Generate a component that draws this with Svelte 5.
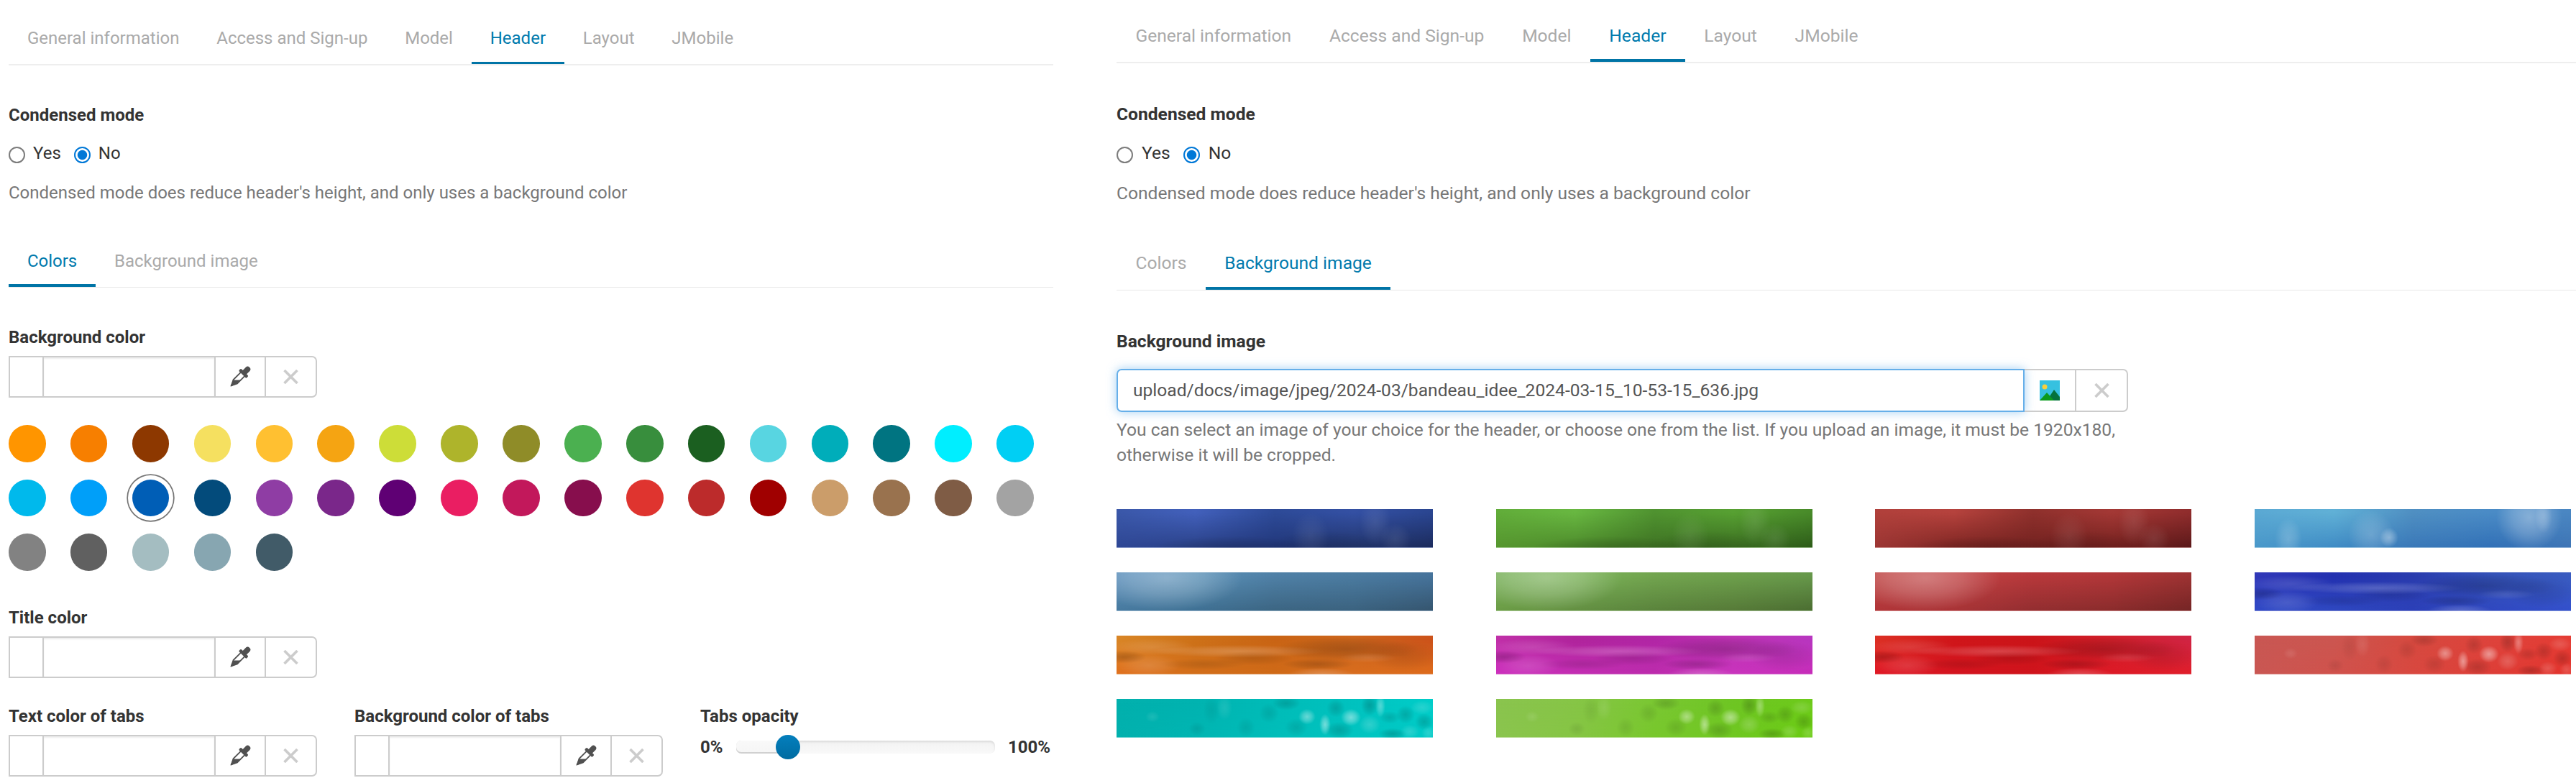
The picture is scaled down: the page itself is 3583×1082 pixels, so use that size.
<script>
    const mainTabs = ["General information", "Access and Sign-up", "Model", "Header", "Layout", "JMobile"];
    const subTabs = ["Colors", "Background image"];

    let selectedColor = "#005eb6";
    let imagePath = "upload/docs/image/jpeg/2024-03/bandeau_idee_2024-03-15_10-53-15_636.jpg";
    let opacity = 20;

    const colors = [
        "#ff9500", "#f77f00", "#8d3800", "#f5e060", "#ffc031", "#f5a412", "#cddd38", "#aeb42b", "#8f8c28",
        "#4bb050", "#388e3d", "#1b5f20", "#58d5e1", "#00adba", "#007481", "#00eeff", "#00cff4",
        "#00b9ec", "#009ff9", "#005eb6", "#034b7b", "#8f3da4", "#7a278a", "#5f0074", "#ea1e62", "#c2185b",
        "#870e4d", "#df342f", "#bc2b2b", "#a00000", "#cb9d6a", "#99724e", "#7f5c45", "#a3a3a3",
        "#828282", "#606060", "#a4bdc1", "#87a6b1", "#415b68"
    ];

    // top / bottom: gradient colors from left to right
    const images = [
        { kind: "waves", top: ["#3a57a8", "#4260bb", "#2d4a97", "#3450a3", "#2a4590"], bottom: ["#2f4794", "#2a4187", "#22377a", "#22356c", "#1c2b5c"] },
        { kind: "waves", top: ["#61ac39", "#68b741", "#4f9230", "#57a032", "#488a29"], bottom: ["#56962f", "#4d8a2b", "#3f7323", "#3b6d21", "#2d5b19"] },
        { kind: "waves", top: ["#b0403b", "#b5423d", "#8e302c", "#a33835", "#8f2c2c"], bottom: ["#9c3634", "#7e2623", "#732220", "#74211f", "#5a191a"] },
        { kind: "bokeh", top: ["#5aa8d3", "#60b0d6", "#4f8fc2", "#4a8bc6", "#4a86c2"], bottom: ["#4a98c9", "#3f8bc4", "#3a78b8", "#3270b6", "#3f75b5"] },
        { kind: "glow", top: ["#6293bd", "#5a90b6", "#4f80a6", "#4b7ba0", "#46739b"], bottom: ["#477a9f", "#3f7093", "#3c6582", "#3b627f", "#35556e"] },
        { kind: "glow", top: ["#7db35f", "#7ab258", "#72a44f", "#6d9f4c", "#66974a"], bottom: ["#6b9c45", "#638f42", "#5a833c", "#567a38", "#4b6d31"] },
        { kind: "glow", top: ["#c04a49", "#c04344", "#b7383b", "#b13739", "#9c3232"], bottom: ["#b03538", "#a83336", "#922e30", "#8a2c2c", "#742525"] },
        { kind: "smoke", top: ["#3138b8", "#2331b0", "#2a3cae", "#3452b8", "#3a5cc0"], bottom: ["#304ac6", "#2f48c0", "#2c40b8", "#3048c0", "#3350cc"] },
        { kind: "smoke", top: ["#d98626", "#cd7118", "#c96414", "#cc651c", "#cc521a"], bottom: ["#e0701e", "#d26e1a", "#cf6a18", "#d86d1e", "#dd6c1c"] },
        { kind: "smoke", top: ["#c030a8", "#b0249c", "#b226a6", "#bd33b3", "#b836c0"], bottom: ["#cc30bd", "#c32eb3", "#bc2cac", "#c934bd", "#c72cb8"] },
        { kind: "smoke", top: ["#dc3024", "#d0161a", "#cb1419", "#d01f2a", "#d02444"], bottom: ["#e01826", "#d3141f", "#cf141c", "#dd1a26", "#e01e2a"] },
        { kind: "pixels", top: ["#c95753", "#cc5650", "#d6493f", "#de433c", "#e43c34"], bottom: ["#c95753", "#d0524c", "#d84840", "#dd3e37", "#e2332d"] },
        { kind: "pixels", top: ["#02b0ad", "#00b3b0", "#00bcb8", "#00c2bf", "#00cdc9"], bottom: ["#02b0ad", "#00b5b2", "#00bdb9", "#00c4c0", "#00c9c5"] },
        { kind: "pixels", top: ["#8ac44e", "#86c546", "#7ac732", "#6ec523", "#6dca1a"], bottom: ["#8ac44e", "#86c544", "#78c72c", "#70c722", "#6acb12"] }
    ];

    // light and dark spots over the gradient: x, y, rx, ry, tone, opacity
    const blobs = {
        waves: [[290, 54, 80, 24, "dark", 0.12], [270, 38, 26, 34, "light", 0.08], [360, 18, 22, 34, "light", 0.09], [388, 42, 22, 22, "light", 0.09], [160, 54, 110, 16, "dark", 0.15]],
        bokeh: [[47, 42, 19, 30, "light", 0.2], [162, 36, 32, 34, "light", 0.2], [187, 40, 13, 14, "light", 0.35], [382, 12, 46, 46, "light", 0.34], [402, 10, 12, 24, "light", 0.2]],
        glow: [[70, 8, 105, 46, "light", 0.3]],
        smoke: [
            [50, 16, 60, 12, "light", 0.12], [170, 22, 120, 9, "light", 0.2], [10, 30, 32, 9, "dark", 0.18],
            [45, 42, 44, 16, "light", 0.13], [320, 19, 100, 17, "dark", 0.18], [190, 32, 56, 10, "dark", 0.1], [350, 31, 40, 7, "light", 0.1],
            [280, 40, 50, 8, "dark", 0.16], [400, 28, 50, 22, "dark", 0.09], [285, 54, 46, 9, "light", 0.2], [120, 40, 60, 8, "dark", 0.1]
        ],
        pixels: [
            [50, 25, 10, 8, "light", 0.1], [132, 16, 12, 20, "dark", 0.06], [150, 12, 11, 18, "light", 0.1], [112, 42, 12, 10, "dark", 0.08],
            [180, 40, 13, 14, "dark", 0.08], [212, 20, 14, 14, "dark", 0.09], [236, 6, 20, 10, "dark", 0.14], [250, 40, 16, 13, "dark", 0.1],
            [265, 25, 12, 11, "light", 0.4], [290, 36, 8, 15, "light", 0.45], [326, 26, 14, 12, "light", 0.45], [305, 13, 13, 13, "dark", 0.14],
            [310, 44, 20, 12, "dark", 0.15], [352, 9, 12, 15, "dark", 0.18], [367, 10, 7, 16, "light", 0.32], [380, 26, 15, 9, "dark", 0.12],
            [352, 36, 15, 13, "light", 0.18], [384, 49, 20, 8, "dark", 0.18], [402, 22, 13, 13, "dark", 0.15], [425, 12, 16, 10, "light", 0.15],
            [428, 32, 13, 12, "dark", 0.16], [408, 46, 13, 10, "light", 0.16], [434, 48, 10, 10, "light", 0.16]
        ]
    };
</script>

{#snippet tabBar(tabs, active)}
    <div class="tabs">
        {#each tabs as tab}
            <span class="tab" class:active={tab === active}>{tab}</span>
        {/each}
    </div>
{/snippet}

{#snippet condensedMode(name)}
    <div class="title">Condensed mode</div>
    <div class="radios">
        <label><input type="radio" {name} />Yes</label>
        <label><input type="radio" {name} checked />No</label>
    </div>
    <div class="help">Condensed mode does reduce header's height, and only uses a background color</div>
{/snippet}

{#snippet cross()}
    <svg class="cross" viewBox="0 0 20 20">
        <path d="M1 1L19 19M19 1L1 19" />
    </svg>
{/snippet}

{#snippet colorField(label)}
    <div class="field">
        <div class="title">{label}</div>
        <div class="color-input">
            <span class="preview"></span>
            <input type="text" aria-label={label} />
            <button class="pick" aria-label="Pick a color">
                <svg viewBox="0 0 28 28">
                    <g transform="rotate(45 14 14)">
                        <rect x="10.200" y="-4.500" width="7.600" height="13" rx="3.600" />
                        <rect x="6.500" y="5" width="15" height="4.600" rx="1.600" />
                        <path class="tube" d="M10.200 9V23.500L14 31L17.800 23.500V9" />
                        <path d="M10.200 24L17.800 16.400V23.500L14.500 32.500H13.500Z" />
                    </g>
                </svg>
            </button>
            <button class="clear" aria-label="Clear">{@render cross()}</button>
        </div>
    </div>
{/snippet}

<div class="page">
    <section class="panel colors">
        {@render tabBar(mainTabs, "Header")}
        {@render condensedMode("condensed-colors")}
        <div class="sub">{@render tabBar(subTabs, "Colors")}</div>

        {@render colorField("Background color")}
        <div class="swatches">
            {#each colors as color}
                <button
                    class="swatch"
                    class:selected={color === selectedColor}
                    style="background-color: {color};"
                    on:click={() => (selectedColor = color)}
                    aria-label={color}
                ></button>
            {/each}
        </div>

        {@render colorField("Title color")}
        <div class="row">
            {@render colorField("Text color of tabs")}
            {@render colorField("Background color of tabs")}
            <div class="field">
                <div class="title">Tabs opacity</div>
                <div class="slider">
                    <b>0%</b>
                    <div class="track">
                        <div class="selection" style="width: {opacity}%;"></div>
                        <div class="handle" style="left: {opacity}%;"></div>
                    </div>
                    <b>100%</b>
                </div>
            </div>
        </div>
    </section>

    <section class="panel image">
        {@render tabBar(mainTabs, "Header")}
        {@render condensedMode("condensed-image")}
        <div class="sub">{@render tabBar(subTabs, "Background image")}</div>

        <div class="title">Background image</div>
        <div class="file-input">
            <div class="path">{imagePath}</div>
            <button class="browse" aria-label="Choose an image">
                <svg viewBox="0 0 28 28">
                    <rect width="28" height="28" fill="#36c1e0" />
                    <circle cx="7" cy="9" r="3.500" fill="#f8cf3d" />
                    <path d="M10 28L20 13L28 23V28Z" fill="#04723c" />
                    <path d="M0 28L10 17L20 28Z" fill="#0b9a1d" />
                </svg>
            </button>
            <button class="clear" aria-label="Clear">{@render cross()}</button>
        </div>
        <div class="help note">You can select an image of your choice for the header, or choose one from the list. If you upload an image, it must be 1920x180, otherwise it will be cropped.</div>

        <div class="gallery">
            {#each images as image, i}
                <svg class="thumb" viewBox="0 0 440 54" preserveAspectRatio="none">
                    <defs>
                        <linearGradient id="top{i}">
                            {#each image.top as c, k}<stop offset={k / 4} stop-color={c} />{/each}
                        </linearGradient>
                        <linearGradient id="bottom{i}">
                            {#each image.bottom as c, k}<stop offset={k / 4} stop-color={c} />{/each}
                        </linearGradient>
                        <linearGradient id="fade{i}" x1="0" y1="0" x2="0" y2="1">
                            <stop offset="0.1" stop-color="#000" />
                            <stop offset="1" stop-color="#fff" />
                        </linearGradient>
                        <mask id="mask{i}"><rect width="440" height="54" fill="url(#fade{i})" /></mask>
                        <radialGradient id="light{i}">
                            <stop offset="0" stop-color="#fff" />
                            <stop offset="0.5" stop-color="#fff" stop-opacity="0.6" />
                            <stop offset="1" stop-color="#fff" stop-opacity="0" />
                        </radialGradient>
                        <radialGradient id="dark{i}">
                            <stop offset="0" stop-color="#000" />
                            <stop offset="0.5" stop-color="#000" stop-opacity="0.6" />
                            <stop offset="1" stop-color="#000" stop-opacity="0" />
                        </radialGradient>
                    </defs>
                    <rect width="440" height="54" fill="url(#top{i})" />
                    <rect width="440" height="54" fill="url(#bottom{i})" mask="url(#mask{i})" />
                    {#each blobs[image.kind] as [cx, cy, rx, ry, tone, alpha]}
                        <ellipse {cx} {cy} {rx} {ry} fill="url(#{tone}{i})" opacity={alpha} />
                    {/each}
                </svg>
            {/each}
        </div>
    </section>
</div>

<style>
    :global(body) {
        background: #fff;
        overflow: hidden;
    }

    .page {
        display: flex;
        height: 1082px;
        overflow: hidden;
        font-family: Roboto, "Liberation Sans", sans-serif;
        color: #333;
    }

    .panel {
        box-sizing: border-box;
        flex: none;
    }

    .colors {
        width: 1465px;
        padding: 16px 0 0 12px;
        font-size: 24px;
        line-height: 34px;
    }

    .image {
        width: 2118px;
        padding: 12px 0 0 88px;
        font-size: 24.6px;
        line-height: 35px;
    }

    .tabs {
        display: flex;
        border-bottom: 2px solid #eee;
    }

    .tab {
        padding: 20px 25.9px 16px;
        border-bottom: 3px solid transparent;
        color: #aaa;
        white-space: nowrap;
    }

    .tab.active {
        color: #007aad;
        border-bottom-color: #0074a6;
    }

    .image .tab {
        padding: 20px 26.4px 15px;
        border-bottom-width: 4px;
    }

    .title {
        font-weight: 700;
        white-space: nowrap;
    }

    .tabs + .title {
        margin-top: 52px;
    }

    .image .tabs + .title {
        margin-top: 53px;
    }

    .radios {
        display: flex;
        gap: 18px;
        margin-top: 19px;
    }

    .radios label {
        display: flex;
        align-items: center;
        gap: 11px;
    }

    .image .radios label {
        gap: 12px;
    }

    .radios input {
        appearance: none;
        box-sizing: border-box;
        width: 23px;
        height: 23px;
        margin: 5px 0 0;
        border: 2px solid #7c7c7c;
        border-radius: 50%;
    }

    .radios input:checked {
        border-color: #0078d7;
        background: radial-gradient(circle, #0078d7 6.2px, #fff 7.2px);
    }

    .help {
        margin-top: 21px;
        color: #777;
    }

    .sub {
        margin: 41px 0 52px;
    }

    .sub .tabs {
        border-bottom-width: 1px;
        border-bottom-color: #e8e8e8;
    }

    .sub .tab {
        padding-bottom: 15px;
        border-bottom-width: 4px;
    }

    .image .sub {
        margin: 42px 0 53px;
    }

    .image .sub .tab {
        padding-bottom: 16px;
    }

    .color-input {
        display: flex;
        box-sizing: border-box;
        width: 429px;
        height: 58px;
        margin-top: 9px;
        border: 2px solid #ccc;
        border-radius: 0 7px 7px 0;
    }

    .color-input input {
        box-sizing: border-box;
        width: 241px;
        padding: 0 16px;
        border: 0;
        border-left: 2px solid #ccc;
        border-right: 2px solid #ccc;
        box-shadow: inset 0 2px 2px rgba(0, 0, 0, 0.075);
        font: inherit;
        outline: none;
    }

    .preview {
        width: 45px;
    }

    button {
        display: flex;
        align-items: center;
        justify-content: center;
        box-sizing: border-box;
        padding: 0;
        border: 0;
        background: none;
        cursor: pointer;
    }

    .pick {
        width: 70px;
        border-right: 2px solid #ccc;
    }

    .pick svg {
        width: 28px;
        height: 28px;
        fill: #505050;
        overflow: visible;
    }

    .pick .tube {
        fill: none;
        stroke: #505050;
        stroke-width: 1.8;
    }

    .clear {
        flex: 1;
    }

    .cross {
        width: 21px;
        height: 20px;
        fill: none;
        stroke: #ccc;
        stroke-width: 3.6;
    }

    .swatches {
        display: grid;
        grid-template-columns: repeat(17, 51.6px);
        column-gap: 34.3px;
        row-gap: 24px;
        margin: 38px 0 48px;
    }

    .swatch {
        width: 51.6px;
        height: 51.6px;
        border-radius: 50%;
    }

    .swatch.selected {
        box-shadow: 0 0 0 6px #fff, 0 0 0 7.7px #757575;
    }

    .row {
        display: flex;
        gap: 52px;
        margin-top: 36px;
    }

    .slider {
        display: flex;
        align-items: center;
        margin-top: 9px;
        height: 34px;
    }

    .slider b:first-child {
        width: 50px;
    }

    .slider b:last-child {
        margin-left: 18px;
    }

    .track {
        position: relative;
        width: 360px;
        height: 18px;
        border-radius: 7px;
        background: linear-gradient(#f2f2f2, #f9f9f9);
        box-shadow: inset 0 2px 3px rgba(0, 0, 0, 0.1);
    }

    .selection {
        height: 18px;
        border-radius: 7px 0 0 7px;
        background: linear-gradient(#f9f9f9, #f5f5f5);
        box-shadow: inset 0 -2px 0 rgba(0, 0, 0, 0.15);
    }

    .handle {
        position: absolute;
        top: -8px;
        width: 34px;
        height: 34px;
        margin-left: -17px;
        border-radius: 50%;
        background: linear-gradient(#047fbd, #006ba1);
    }

    .file-input {
        display: flex;
        width: 1407px;
        height: 60px;
        margin-top: 21px;
    }

    .path {
        box-sizing: border-box;
        width: 1263px;
        padding: 0 21px;
        border: 2px solid #66afe9;
        border-radius: 7px 0 0 7px;
        box-shadow: 0 0 14px rgba(102, 175, 233, 0.6);
        line-height: 56px;
        color: #555;
    }

    .file-input button {
        border: 2px solid #ccc;
        border-left: 0;
    }

    .browse {
        width: 72px;
    }

    .browse svg {
        width: 28px;
        height: 28px;
    }

    .file-input .clear {
        border-radius: 0 7px 7px 0;
    }

    .note {
        width: 1407px;
        margin-top: 7px;
    }

    .gallery {
        display: grid;
        grid-template-columns: repeat(4, 440px);
        column-gap: 87.7px;
        row-gap: 34.5px;
        margin-top: 58px;
    }

    .thumb {
        display: block;
        width: 440px;
        height: 53.5px;
    }
</style>
